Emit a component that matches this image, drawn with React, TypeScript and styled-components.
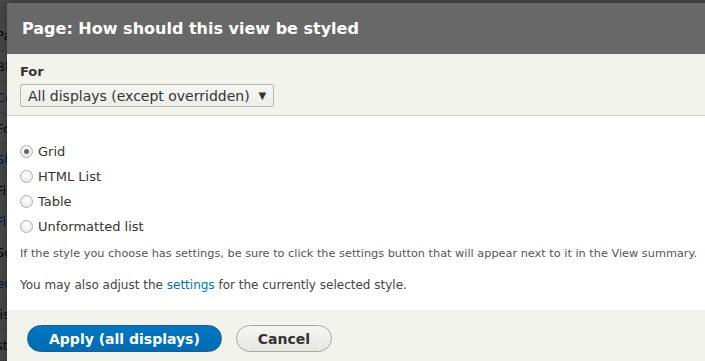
import React from 'react';
import styled, { createGlobalStyle } from 'styled-components';

const GlobalStyle = createGlobalStyle`
  html, body {
    margin: 0;
    padding: 0;
    height: 100%;
    overflow: hidden;
    font-family: "DejaVu Sans", "Noto Sans", sans-serif;
    background: #ffffff;
  }
`;

const Page = styled.div`
  padding-top: 20px;
`;

const PageRow = styled.div<{ $link?: boolean }>`
  height: 30px;
  border-bottom: 1px solid #dddddd;
  display: flex;
  align-items: center;
  font-size: 13px;
  color: ${(p) => (p.$link ? '#0074bd' : '#222')};
  white-space: nowrap;
  margin-left: -4px;
`;

const Overlay = styled.div`
  position: fixed;
  inset: 0;
  background: rgba(0, 0, 0, 0.72);
`;

const Dialog = styled.div`
  position: fixed;
  left: 7px;
  top: 3px;
  width: 760px;
  bottom: -40px;
  display: flex;
  flex-direction: column;
  background: #f3f3ee;
  box-shadow: 0 0 10px rgba(0, 0, 0, 0.3);
`;

const Header = styled.div`
  height: 51px;
  flex: none;
  background: #686868;
  display: flex;
  align-items: center;
  padding-left: 15px;
`;

const Title = styled.h1`
  margin: 0;
  color: #ffffff;
  font-size: 16px;
  font-weight: bold;
`;

const ForSection = styled.div`
  background: #f3f3ee;
  border-bottom: 1px solid #cccccc;
  padding: 10px 13px 8px;
  flex: none;
`;

const Label = styled.div`
  font-size: 13px;
  font-weight: bold;
  color: #333;
  margin-bottom: 5px;
`;

const Select = styled.div`
  display: inline-flex;
  align-items: center;
  gap: 9px;
  height: 21px;
  padding: 0 7px;
  border: 1px solid #b8b8b3;
  border-radius: 2px;
  background: linear-gradient(#f5f5f2, #eeeee9);
  font-size: 14px;
  color: #333;
`;

const Caret = styled.span`
  font-size: 10px;
  color: #333;
`;

const Body = styled.div`
  flex: none;
  background: #ffffff;
  padding: 23px 13px 18px;
`;

const RadioRow = styled.label`
  display: flex;
  align-items: center;
  gap: 5px;
  height: 25px;
  font-size: 13px;
  color: #333;
`;

const Radio = styled.span<{ $checked?: boolean }>`
  width: 11px;
  height: 11px;
  border-radius: 50%;
  border: 1px solid #b0b0b0;
  background: radial-gradient(circle at 50% 35%, #ffffff 0%, #e4e4e4 100%);
  display: flex;
  align-items: center;
  justify-content: center;
  &::after {
    content: '';
    display: ${(p) => (p.$checked ? 'block' : 'none')};
    width: 5px;
    height: 5px;
    border-radius: 50%;
    background: #666;
  }
`;

const Help = styled.p`
  margin: 8px 0 0;
  font-size: 11.3px;
  color: #555;
  white-space: nowrap;
`;

const Note = styled.p`
  margin: 18px 0 0;
  font-size: 12px;
  color: #444;
`;

const Link = styled.a`
  color: #0074bd;
  text-decoration: none;
`;

const Footer = styled.div`
  background: #f3f3ee;
  flex: 1;
  display: flex;
  align-items: flex-start;
  gap: 14px;
  padding: 15px 20px 0;
`;

const Button = styled.button<{ $primary?: boolean }>`
  height: 27px;
  border-radius: 14px;
  font-family: inherit;
  font-size: 14px;
  font-weight: bold;
  padding: 0 21px;
  cursor: pointer;
  border: 1px solid ${(p) => (p.$primary ? '#1e5c90' : '#a6a6a6')};
  color: ${(p) => (p.$primary ? '#ffffff' : '#333')};
  background: ${(p) =>
    p.$primary ? 'linear-gradient(#0077c0, #006bb0)' : 'linear-gradient(#f6f6f3, #e6e6e1)'};
`;

const pageRows = [
  { t: 'Page', link: false },
  { t: 'Block', link: false },
  { t: 'Content', link: true },
  { t: 'Format', link: false },
  { t: 'Show', link: true },
  { t: 'Fields', link: false },
  { t: 'Filter', link: true },
  { t: 'Sort', link: false },
  { t: 'ection', link: true },
  { t: 'list', link: false },
  { t: 'st', link: false },
];

export default function App() {
  return (
    <>
      <GlobalStyle />
      <Page>
        {pageRows.map((r, i) => (
          <PageRow key={i} $link={r.link}>
            {r.t}
          </PageRow>
        ))}
      </Page>
      <Overlay />
      <Dialog>
        <Header>
          <Title>Page: How should this view be styled</Title>
        </Header>
        <ForSection>
          <Label>For</Label>
          <Select>
            All displays (except overridden) <Caret>▼</Caret>
          </Select>
        </ForSection>
        <Body>
          <RadioRow>
            <Radio $checked /> Grid
          </RadioRow>
          <RadioRow>
            <Radio /> HTML List
          </RadioRow>
          <RadioRow>
            <Radio /> Table
          </RadioRow>
          <RadioRow>
            <Radio /> Unformatted list
          </RadioRow>
          <Help>
            If the style you choose has settings, be sure to click the settings button that will appear next to it in the View summary.
          </Help>
          <Note>
            You may also adjust the <Link href="#">settings</Link> for the currently selected style.
          </Note>
        </Body>
        <Footer>
          <Button $primary>Apply (all displays)</Button>
          <Button>Cancel</Button>
        </Footer>
      </Dialog>
    </>
  );
}
